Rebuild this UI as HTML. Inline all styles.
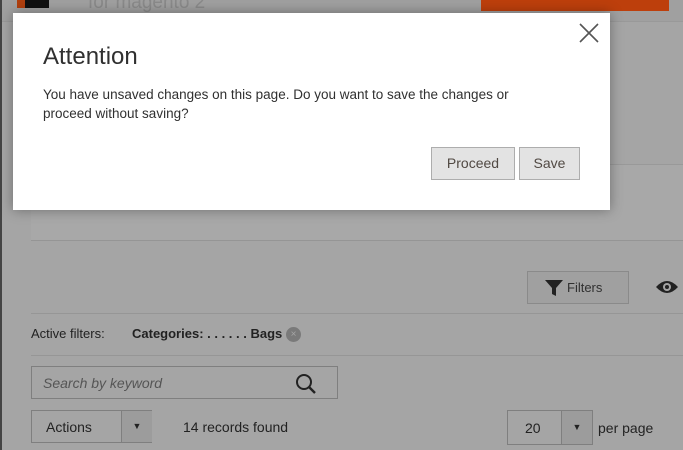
<!DOCTYPE html>
<html><head><style>
*{margin:0;padding:0;box-sizing:border-box}
body{width:683px;height:450px;overflow:hidden;background:#a5a5a5;font-family:"Liberation Sans",sans-serif;position:relative;color:#303030}
.abs{position:absolute}
</style></head><body>
<div class="abs" style="left:0;top:0;width:2px;height:450px;background:#444"></div>
<div class="abs" style="left:2px;top:0;width:681px;height:22px;background:#a0a0a0;border-bottom:1px solid #999"></div>
<div class="abs" style="left:17px;top:0;width:8px;height:8px;background:#b0400f"></div>
<div class="abs" style="left:25px;top:0;width:24px;height:8px;background:#111"></div>
<div class="abs" style="left:88px;top:-8px;font-size:19px;color:#8a8a8a">for magento 2</div>
<div class="abs" style="left:481px;top:0;width:188px;height:11px;background:#bd3f0c"></div>
<div class="abs" style="left:31px;top:164px;width:652px;height:77px;background:#a8a8a8;border-top:1px solid #999;border-bottom:1px solid #959595"></div>
<div class="abs" style="left:527px;top:271px;width:102px;height:33px;background:#a0a0a0;border:1px solid #8a8a8a;font-size:13px;color:#303030">
<svg class="abs" style="left:17px;top:8px" width="18" height="16" viewBox="0 0 18 16"><path d="M0 0H18L11 8V16L7 14V8Z" fill="#222"/></svg>
<span class="abs" style="left:39px;top:8px">Filters</span></div>
<svg class="abs" style="left:655px;top:279px" width="24" height="16" viewBox="0 0 24 16"><path d="M1 8Q12 -4 23 8Q12 20 1 8Z" fill="#222"/><circle cx="12" cy="8" r="4" fill="#a5a5a5"/><circle cx="12" cy="8" r="2" fill="#222"/></svg>
<div class="abs" style="left:31px;top:313px;width:652px;height:1px;background:#969696"></div>
<div class="abs" style="left:31px;top:326px;font-size:13px;color:#222">Active filters:</div>
<div class="abs" style="left:132px;top:326px;font-size:13px;color:#222;font-weight:bold">Categories: . . . . . . Bags</div>
<div class="abs" style="left:286px;top:327px;width:15px;height:15px;border-radius:50%;background:#7a7a7a;color:#a5a5a5;font-size:10px;text-align:center;line-height:15px">×</div>
<div class="abs" style="left:31px;top:355px;width:652px;height:1px;background:#969696"></div>
<div class="abs" style="left:31px;top:366px;width:307px;height:33px;border:1px solid #7f7f7f;background:#a5a5a5">
<span class="abs" style="left:11px;top:8px;font-size:14px;font-style:italic;color:#555">Search by keyword</span>
<svg class="abs" style="left:263px;top:6px" width="22" height="22" viewBox="0 0 22 22"><circle cx="9" cy="9" r="7" fill="none" stroke="#222" stroke-width="2"/><path d="M14 14L20 20" stroke="#222" stroke-width="2.4"/></svg></div>
<div class="abs" style="left:31px;top:410px;width:121px;height:33px;border:1px solid #7f7f7f;background:#a5a5a5">
<span class="abs" style="left:14px;top:8px;font-size:14px;color:#222">Actions</span>
<div class="abs" style="left:89px;top:0;width:31px;height:31px;border-left:1px solid #7f7f7f;background:#9c9c9c;font-size:9px;text-align:center;line-height:31px;color:#222">▼</div></div>
<div class="abs" style="left:183px;top:419px;font-size:14px;color:#222">14 records found</div>
<div class="abs" style="left:507px;top:410px;width:86px;height:35px;border:1px solid #7f7f7f;background:#a5a5a5">
<span class="abs" style="left:17px;top:9px;font-size:14px;color:#222">20</span>
<div class="abs" style="left:53px;top:0;width:31px;height:33px;border-left:1px solid #7f7f7f;background:#9c9c9c;font-size:9px;text-align:center;line-height:33px;color:#222">▼</div></div>
<div class="abs" style="left:598px;top:420px;font-size:14px;color:#222">per page</div>

<div class="abs" style="left:13px;top:13px;width:597px;height:197px;background:#fff;box-shadow:0 0 12px rgba(0,0,0,.35)">
<svg class="abs" style="left:566px;top:10px" width="20" height="20" viewBox="0 0 20 20"><path d="M1 1L19 19M19 1L1 19" stroke="#555" stroke-width="1.6"/></svg>
<div class="abs" style="left:30px;top:30px;font-size:24px;color:#303030">Attention</div>
<div class="abs" style="left:30px;top:72px;font-size:13.5px;line-height:19px;color:#303030;width:500px">You have unsaved changes on this page. Do you want to save the changes or proceed without saving?</div>
<div class="abs" style="left:418px;top:134px;width:84px;height:33px;background:#e3e3e3;border:1px solid #adadad;font-size:14px;text-align:center;line-height:31px;color:#514943">Proceed</div>
<div class="abs" style="left:506px;top:134px;width:61px;height:33px;background:#e3e3e3;border:1px solid #adadad;font-size:14px;text-align:center;line-height:31px;color:#514943">Save</div>
</div>
</body></html>
